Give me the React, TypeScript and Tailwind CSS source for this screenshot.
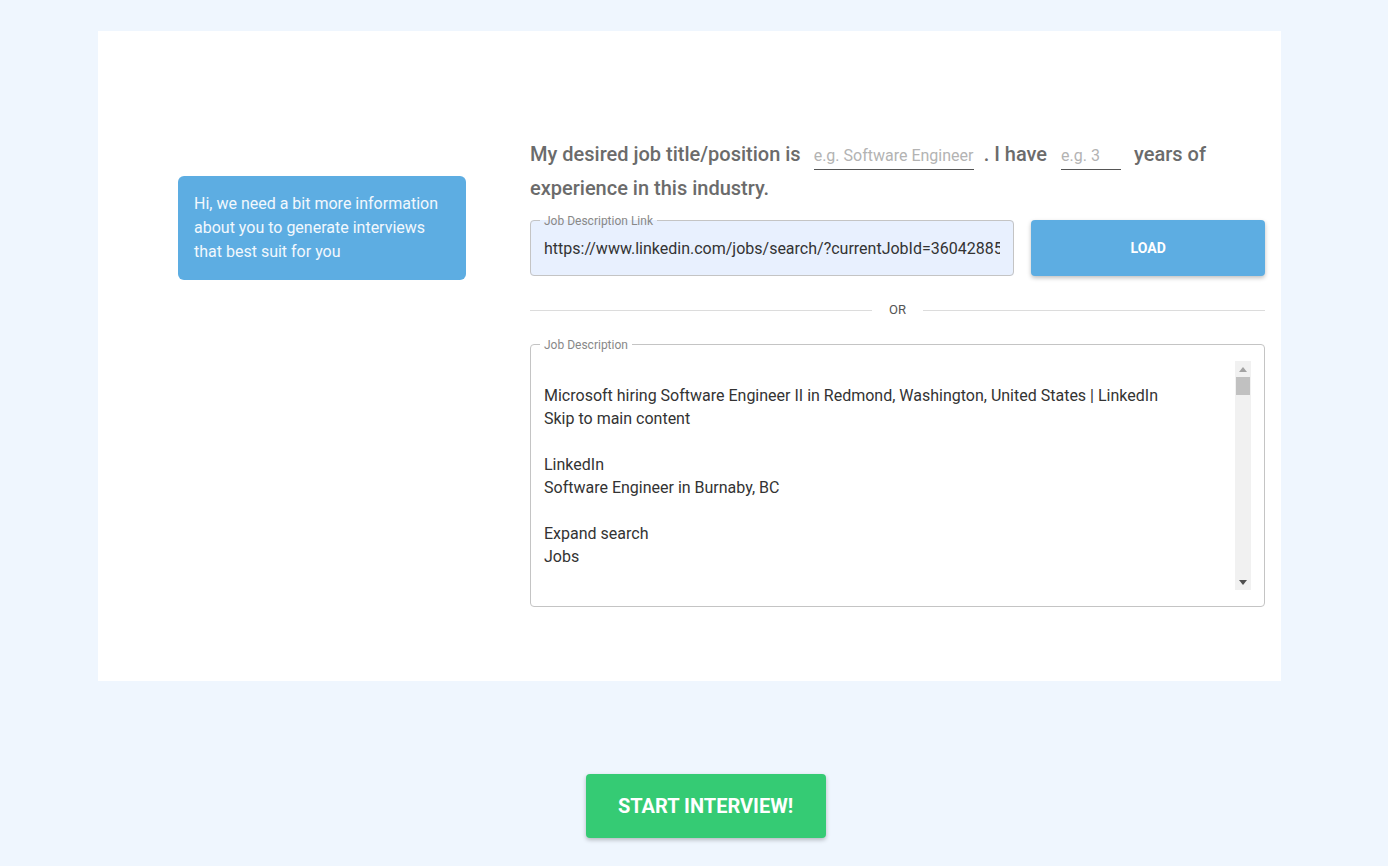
import { useState } from "react"

const JOB_TEXT = `
Microsoft hiring Software Engineer II in Redmond, Washington, United States | LinkedIn
Skip to main content

LinkedIn
Software Engineer in Burnaby, BC

Expand search
Jobs

People
Learning

Dismiss
Join now
Sign in`

// Classic (non-overlay) scrollbar look, drawn by hand
function FakeScrollbar() {
  return (
    <div className="flex h-[229px] w-[16px] shrink-0 flex-col items-center bg-[#f1f1f1]">
      <div className="flex h-[16px] w-full items-center justify-center">
        <svg width="8" height="5" viewBox="0 0 8 5">
          <path d="M4 0 L8 5 L0 5 Z" fill="#a3a3a3" />
        </svg>
      </div>
      <div className="h-[18px] w-[14px] bg-[#c1c1c1]" />
      <div className="flex-1" />
      <div className="flex h-[16px] w-full items-center justify-center">
        <svg width="8" height="5" viewBox="0 0 8 5">
          <path d="M0 0 L8 0 L4 5 Z" fill="#505050" />
        </svg>
      </div>
    </div>
  )
}

export default function App() {
  const [title, setTitle] = useState("")
  const [years, setYears] = useState("")
  const [link, setLink] = useState("https://www.linkedin.com/jobs/search/?currentJobId=3604288554")
  const [desc, setDesc] = useState(JOB_TEXT)

  return (
    <div className="min-h-screen w-full bg-[#eff6fe] font-['Roboto',sans-serif]">
      <div className="pt-[31px] pl-[98px]">
        {/* Main card */}
        <div className="flex h-[650px] w-[1183px] bg-white">
          {/* Left: chat bubble */}
          <div className="flex w-[432px] shrink-0 pt-[145px] pl-[80px]">
            <div className="h-[104px] w-[288px] rounded-[6px] bg-[#5dade2] px-4 pt-[16px] text-[16px] leading-6 text-[#f2f8fd]">
              Hi, we need a bit more information about you to generate interviews that best suit for you
            </div>
          </div>

          {/* Right: form */}
          <div className="flex w-[735px] flex-col pt-[106px]">
            <div className="text-[20px] font-medium leading-[34px] text-[#6b6b6b]">
              My desired job title/position is
              <input
                value={title}
                onChange={(e) => setTitle(e.target.value)}
                placeholder="e.g. Software Engineer"
                className="ml-[13px] mr-[10px] h-[26px] w-[160px] border-b border-[#555] px-0 text-[16px] leading-[26px] font-normal text-[#333] outline-none placeholder:text-[#b3b3b3]"
              />
              . I have
              <input
                value={years}
                onChange={(e) => setYears(e.target.value)}
                placeholder="e.g. 3"
                className="ml-[14px] mr-[13px] h-[26px] w-[60px] border-b border-[#555] px-0 text-[16px] leading-[26px] font-normal text-[#333] outline-none placeholder:text-[#b3b3b3]"
              />
              years of experience in this industry.
            </div>

            {/* Link + load */}
            <div className="mt-[15px] flex gap-[17px]">
              <fieldset className="h-[56px] w-[485px] rounded-[4px] border border-[#c4c4c4] bg-[#e8f0fe]">
                <legend className="ml-[9px] px-[4px] text-[12px] leading-[0px] text-[#888]">
                  Job Description Link
                </legend>
                <input
                  value={link}
                  onChange={(e) => setLink(e.target.value)}
                  className="h-full w-full bg-transparent px-[13px] text-[16px] text-[#333] outline-none"
                />
              </fieldset>
              <button className="h-[56px] w-[234px] rounded-[4px] bg-[#5dade2] text-[14px] font-bold text-white shadow-[0_2px_4px_rgba(0,0,0,0.25)]">
                LOAD
              </button>
            </div>

            {/* OR divider */}
            <div className="mt-[25px] flex items-center gap-[17px]">
              <div className="h-px flex-1 bg-[#dcdcdc]" />
              <span className="text-[13px] leading-[18px] text-[#555]">OR</span>
              <div className="h-px flex-1 bg-[#dcdcdc]" />
            </div>

            {/* Job description */}
            <fieldset className="mt-[25px] h-[263px] w-full rounded-[4px] border border-[#c4c4c4]">
              <legend className="ml-[9px] px-[4px] text-[12px] leading-[0px] text-[#888]">
                Job Description
              </legend>
              <div className="flex pt-[16px] pr-[13px]">
                <textarea
                  value={desc}
                  onChange={(e) => setDesc(e.target.value)}
                  className="h-[229px] flex-1 resize-none overflow-hidden pl-[13px] pr-[12px] text-[16px] leading-[23px] text-[#333] outline-none"
                />
                <FakeScrollbar />
              </div>
            </fieldset>
          </div>
        </div>
      </div>

      {/* Start button */}
      <div className="flex justify-center pt-[93px] pl-[23px]">
        <button className="h-[64px] w-[240px] rounded-[4px] bg-[#35cb74] text-[20px] font-bold text-white shadow-[0_2px_4px_rgba(0,0,0,0.25)]">
          START INTERVIEW!
        </button>
      </div>
    </div>
  )
}
